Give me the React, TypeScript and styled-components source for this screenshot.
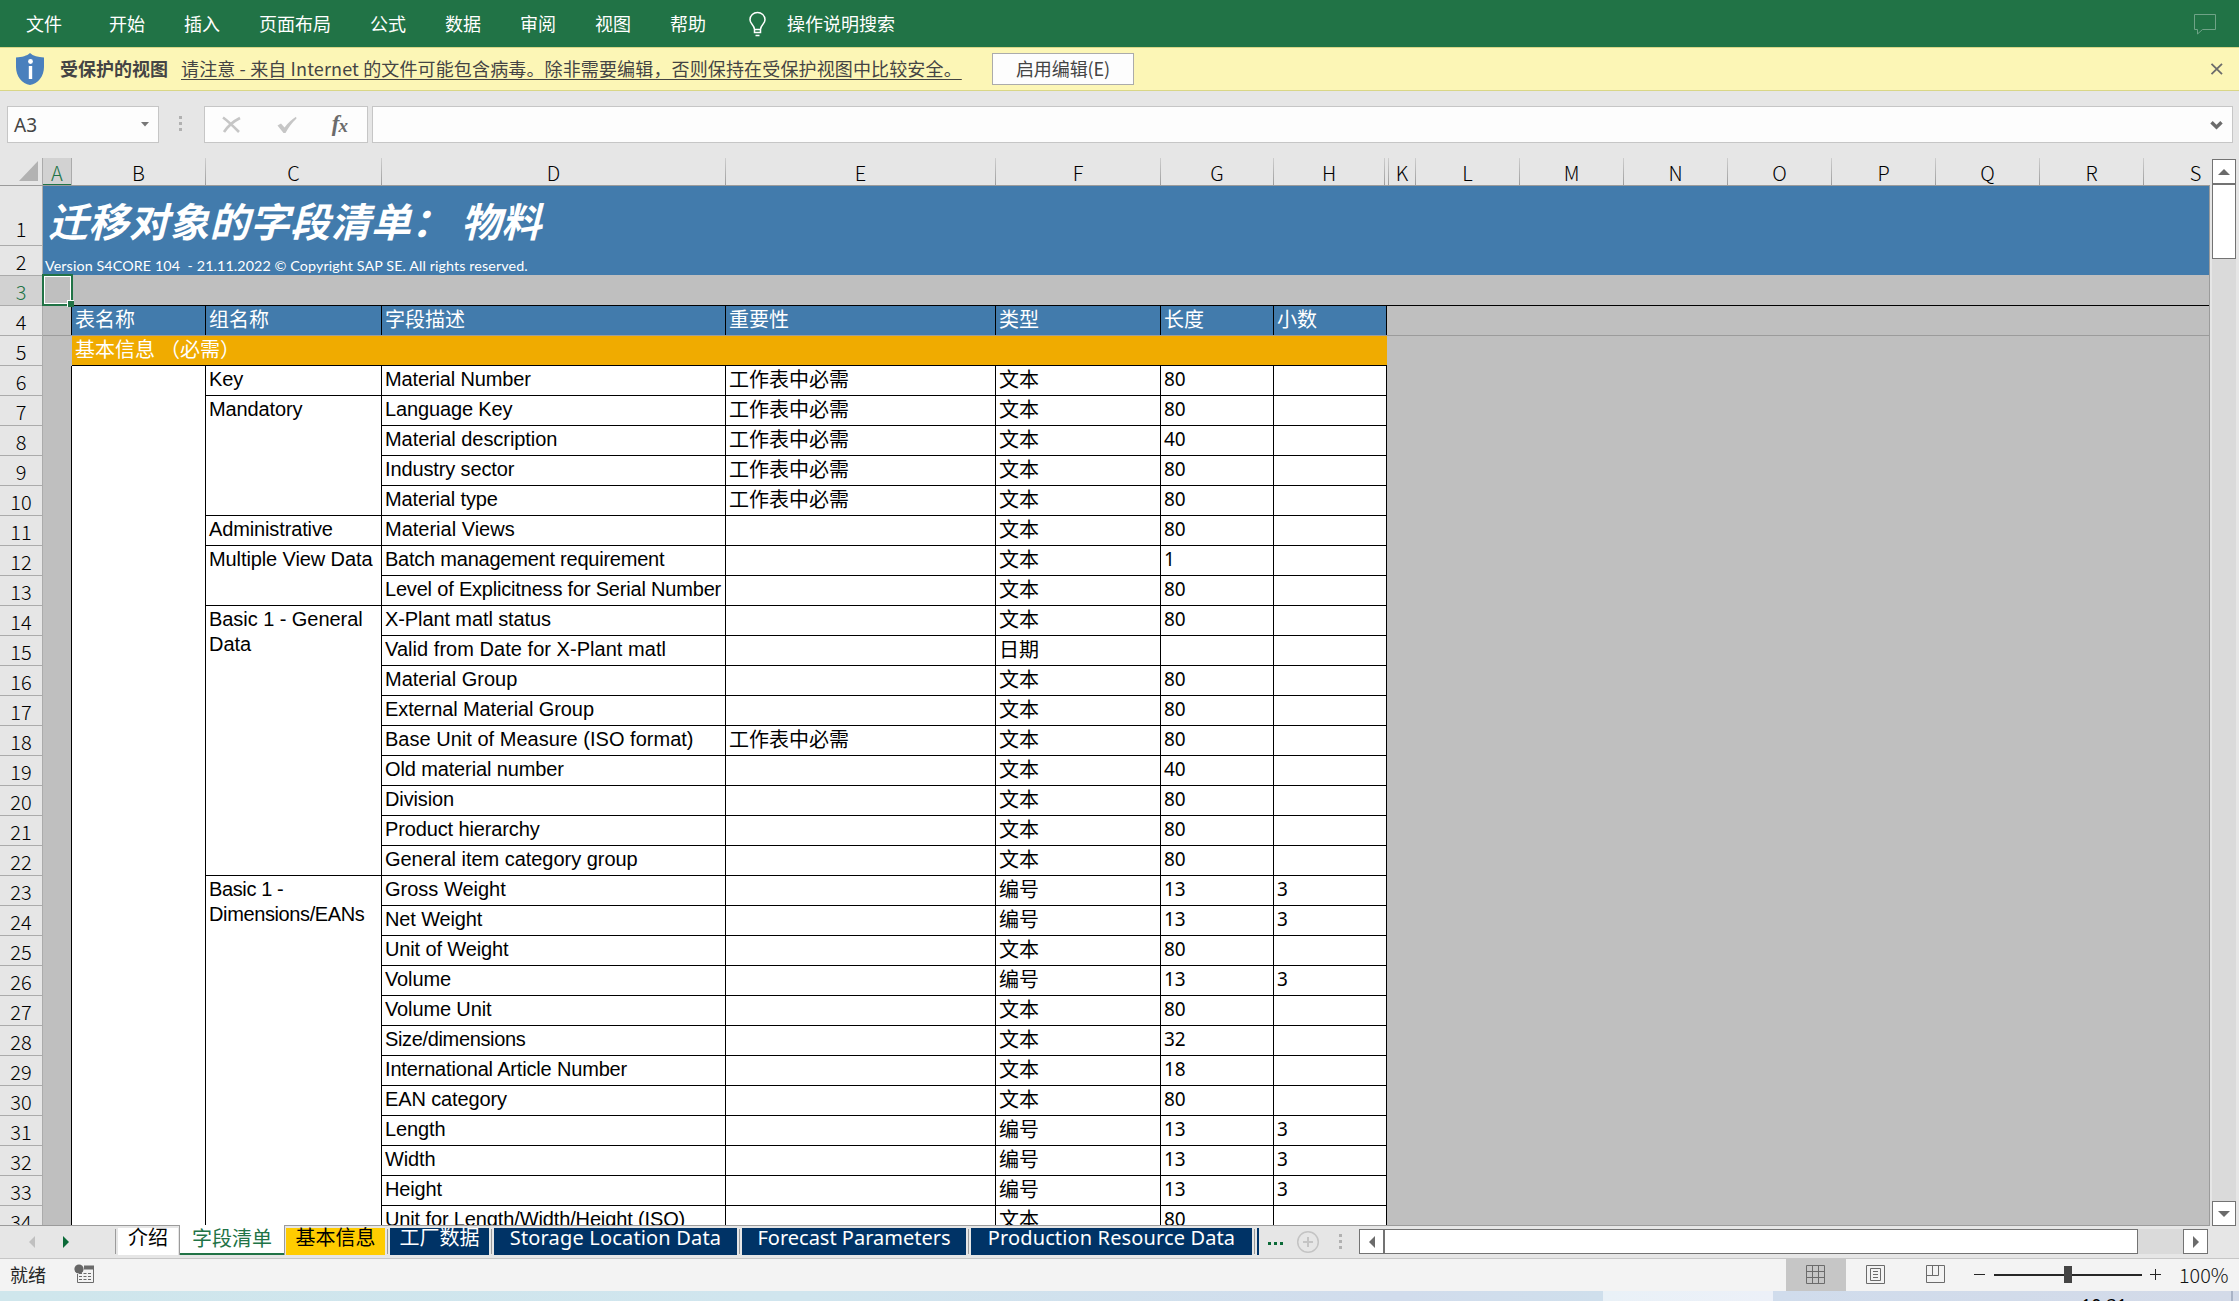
import React from "react";
import styled, { createGlobalStyle } from "styled-components";

const UI = `"Noto Sans CJK SC", "Noto Sans", sans-serif`;
const LATIN_UI = `"Noto Sans", "Noto Sans CJK SC", sans-serif`;

const Global = createGlobalStyle`
  * { box-sizing: border-box; }
  body { margin: 0; overflow: hidden; background: #e6e6e6; }
`;

const Window = styled.div`
  width: 2239px;
  height: 1301px;
  display: flex;
  flex-direction: column;
  overflow: hidden;
  background: #e6e6e6;
  font-family: ${UI};
  color: #444;
`;

/* ---------- ribbon ---------- */
const Ribbon = styled.nav`
  height: 47px;
  flex: none;
  display: flex;
  align-items: center;
  padding: 0 22px 0 26px;
  background: #217346;
  color: #fff;
  font-size: 18px;
  line-height: 26px;
`;
const MenuItem = styled.span<{ $gap?: number }>`
  margin-right: ${(p) => p.$gap ?? 39}px;
  padding-bottom: 2px;
  white-space: nowrap;
`;
const Spacer = styled.div`
  flex: 1;
`;

/* ---------- protected view bar ---------- */
const Notice = styled.div`
  height: 44px;
  flex: none;
  display: flex;
  align-items: center;
  padding: 0 15px 0 16px;
  background: #fcf6b6;
  border-top: 1px solid #d9d687;
  border-bottom: 1px solid #d9d687;
  font-size: 18px;
  line-height: 26px;
  white-space: nowrap;
`;
const NoticeTitle = styled.b`
  margin: 0 13px 0 16px;
  padding-bottom: 2px;
`;
const NoticeLink = styled.span`
  width: 781px;
  padding-bottom: 2px;
  letter-spacing: 0.14px;
  text-decoration: underline;
  text-decoration-thickness: 1px;
  text-underline-offset: 3px;
`;
const EnableButton = styled.button`
  width: 142px;
  height: 32px;
  margin-left: 30px;
  padding: 0;
  border: 1px solid #ababab;
  background: #fdfdfd;
  color: #444;
  font: 18px/26px ${UI};
  letter-spacing: -0.1px;
  padding-bottom: 2px;
`;

/* ---------- formula bar ---------- */
const FormulaBar = styled.div`
  height: 67px;
  flex: none;
  display: flex;
  align-items: flex-start;
  padding: 15px 6px 0 7px;
`;
const Field = styled.div<{ $w?: number }>`
  height: 37px;
  width: ${(p) => (p.$w ? `${p.$w}px` : "auto")};
  flex: ${(p) => (p.$w ? "none" : 1)};
  display: flex;
  align-items: center;
  justify-content: space-between;
  border: 1px solid #c6c6c6;
  background: #fdfdfd;
`;
const NameText = styled.span`
  padding: 2px 0 0 6px;
  font: 19px/33px ${LATIN_UI};
`;
const Dots = styled.div<{ $m: string }>`
  margin: ${(p) => p.$m};
  display: grid;
  gap: 3px;
  flex: none;
  i {
    width: 3px;
    height: 3px;
    background: #b1b1b1;
  }
`;
const Fx = styled.span`
  font: italic bold 23px/30px "Liberation Serif", serif;
  color: #6b6b6b;
  letter-spacing: -1px;
  sub {
    font-size: 19px;
    vertical-align: -1px;
  }
`;

/* ---------- sheet ---------- */
const Middle = styled.div`
  height: 1068px;
  flex: none;
  display: flex;
`;
const Sheet = styled.div`
  width: 2210px;
  height: 1068px;
  flex: none;
  overflow: hidden;
  border-bottom: 1px solid #9b9b9b;
`;
const HeaderRow = styled.div`
  height: 28px;
  display: flex;
  overflow: hidden;
  border-bottom: 1px solid #9b9b9b;
`;
const Corner = styled.div`
  width: 43px;
  flex: none;
  display: flex;
  justify-content: flex-end;
  align-items: flex-end;
  padding: 0 4px 4px 0;
  border-right: 1px solid #ababab;
`;
const ColHead = styled.div<{ $w: number; $active?: boolean }>`
  width: ${(p) => p.$w}px;
  height: 28px;
  flex: none;
  text-align: center;
  font: 300 20px/29px ${UI};
  color: ${(p) => (p.$active ? "#217346" : "#000")};
  background: ${(p) => (p.$active ? "#d2d2d2" : "transparent")};
  border-style: solid;
  border-width: 0 1px 0 0;
  border-image: ${(p) =>
    p.$active ? "linear-gradient(#ababab, #ababab) 1" : "linear-gradient(#d0d0d0, #999) 1"};
  box-shadow: ${(p) => (p.$active ? "inset 0 -2px #217346" : "none")};
`;
const SheetBody = styled.div`
  display: flex;
  height: 1039px;
  overflow: hidden;
  border-right: 1px solid #9b9b9b;
`;
const RowHeads = styled.div`
  width: 43px;
  flex: none;
`;
const RowHead = styled.div<{ $h: number; $active?: boolean }>`
  height: ${(p) => p.$h}px;
  display: flex;
  align-items: flex-end;
  justify-content: center;
  padding-bottom: ${(p) => (p.$h > 30 ? 3 : 0)}px;
  font: 300 20px/26px ${UI};
  color: ${(p) => (p.$active ? "#217346" : "#000")};
  background: ${(p) => (p.$active ? "#d2d2d2" : "#e6e6e6")};
  border-right: 1px solid #ababab;
  border-bottom: 1px solid #ababab;
`;
const Cells = styled.div`
  position: relative;
  flex: 1;
  background: #bfbfbf;
`;
const Banner = styled.div`
  height: 89px;
  background: #427bac;
  color: #fff;
  white-space: pre;
  overflow: hidden;
`;
const Title = styled.div`
  height: 60px;
  padding-left: 5px;
  font: italic bold 40px/68px ${UI};
  letter-spacing: 0.35px;
`;
const Version = styled.div`
  padding-left: 2px;
  font: 14.3px/40px Lato, sans-serif;
  height: 29px;
  letter-spacing: 0.1px;
`;
const BlankRow = styled.div`
  height: 31px;
  margin-left: 29px;
  border-bottom: 1px solid #000;
`;
const Selection = styled.div`
  position: absolute;
  left: -1px;
  top: 88px;
  width: 31px;
  height: 32px;
  border: 2px solid #217346;
  outline: 1px solid #fff;
  outline-offset: -3px;
  &::after {
    content: "";
    position: absolute;
    right: -3px;
    bottom: -3px;
    width: 6px;
    height: 6px;
    background: #217346;
    border-left: 1px solid #fff;
    border-top: 1px solid #fff;
  }
`;
const columns = "134px 176px 344px 270px 165px 113px 113px";
const FrozenRow = styled.div`
  height: 30px;
  padding-left: 28px;
  border-bottom: 1px solid #9b9b9b;
`;
const HeadCells = styled.div`
  width: 1316px;
  height: 29px;
  display: grid;
  grid-template-columns: ${columns};
  background: #427bac;
  border-left: 1px solid #000;
`;
const HeadCell = styled.div`
  padding-left: 3px;
  color: #fff;
  font: 400 20px/25px ${UI};
  border-right: 1px solid #000;
`;
const Section = styled.div`
  width: 1315px;
  height: 30px;
  margin-left: 29px;
  padding-left: 3px;
  background: #f0ab00;
  border-bottom: 1px solid #000;
  color: #fff;
  font: 400 20px/25px ${UI};
  font-feature-settings: "halt";
  word-spacing: 3px;
  white-space: pre;
`;
const Table = styled.div`
  width: 1316px;
  margin-left: 28px;
  display: grid;
  grid-template-columns: ${columns};
  grid-auto-rows: 30px;
  background: #fff;
  border-left: 1px solid #000;
`;
const Cell = styled.div<{
  $col: number;
  $row: number;
  $span?: number;
  $kind?: "cjk" | "num";
  $track?: number;
}>`
  grid-column: ${(p) => p.$col};
  grid-row: ${(p) => p.$row} / span ${(p) => p.$span ?? 1};
  padding-left: 3px;
  padding-top: ${(p) => (p.$kind === "cjk" ? 0 : 1)}px;
  border-right: 1px solid #000;
  border-bottom: 1px solid #000;
  color: #000;
  white-space: ${(p) => (p.$col === 2 ? "normal" : "nowrap")};
  font: ${(p) =>
    p.$kind === "cjk"
      ? `400 20px/25px ${UI}`
      : p.$kind === "num"
        ? `19px/24px ${LATIN_UI}`
        : `20px/25px "Liberation Sans", sans-serif`};
  letter-spacing: ${(p) => p.$track ?? (p.$kind ? 0 : -0.13)}px;
`;

/* ---------- scroll bars ---------- */
const VScroll = styled.div`
  width: 24px;
  height: 1068px;
  margin-left: 2px;
  display: flex;
  flex-direction: column;
  padding-top: 1px;
  background: linear-gradient(#dadada, #dadada) 0 10px / 24px 1050px no-repeat;
`;
const ScrollBox = styled.div<{ $w: number; $h: number }>`
  width: ${(p) => p.$w}px;
  height: ${(p) => p.$h}px;
  flex: none;
  display: flex;
  align-items: center;
  justify-content: center;
  background: #fff;
  border: 1px solid #737373;
`;

/* ---------- sheet tabs ---------- */
const TabBar = styled.div`
  height: 32px;
  flex: none;
  display: flex;
  align-items: flex-start;
`;
const TabNav = styled.div`
  width: 115px;
  height: 32px;
  flex: none;
  display: flex;
  align-items: center;
  gap: 28px;
  padding: 0 0 0 29px;
`;
const Tab = styled.div<{ $w: number; $bg: string; $fg: string; $ml?: number; $track?: number }>`
  width: ${(p) => p.$w}px;
  height: 27px;
  flex: none;
  margin: 2px 0 0 ${(p) => p.$ml ?? 2}px;
  background: ${(p) => p.$bg};
  color: ${(p) => p.$fg};
  text-align: center;
  white-space: nowrap;
  font: 20px/19px ${LATIN_UI};
  letter-spacing: ${(p) => p.$track ?? 0}px;
`;
const ActiveTab = styled.div`
  width: 106px;
  height: 30px;
  flex: none;
  margin: -1px 0 0 1px;
  background: #fff;
  color: #217346;
  text-align: center;
  font: 400 20px/25px ${UI};
  border: 1px solid #9b9b9b;
  border-width: 0 1px 0 1px;
  box-shadow: inset 0 -2px #217346;
`;
const Sep = styled.div<{ $ml?: number }>`
  width: 1px;
  height: 25px;
  flex: none;
  margin: 3px 0 0 ${(p) => p.$ml ?? 2}px;
  background: #9b9b9b;
`;
const More = styled.div`
  display: flex;
  gap: 3px;
  margin: 16px 13px 0 9px;
  i {
    width: 3px;
    height: 3px;
    background: #0b6a38;
  }
`;
const AddIcon = styled.svg`
  flex: none;
  margin-top: 4px;
`;
const HScroll = styled.div`
  width: 849px;
  height: 25px;
  flex: none;
  display: flex;
  margin-top: 3px;
  background: #dadada;
`;

/* ---------- status bar ---------- */
const Status = styled.div`
  height: 33px;
  flex: none;
  display: flex;
  align-items: center;
  background: #f3f3f3;
  border-top: 1px solid #c6c6c6;
  padding-left: 10px;
  font-size: 18px;
  line-height: 26px;
`;
const Ready = styled.span`
  padding-bottom: 2px;
  color: #262626;
`;
const ViewButton = styled.div<{ $on?: boolean }>`
  width: 60px;
  height: 32px;
  display: flex;
  align-items: center;
  justify-content: center;
  background: ${(p) => (p.$on ? "#c6c6c6" : "transparent")};
`;
const Percent = styled.span`
  width: 50px;
  margin: 0 10px 0 18px;
  font: 300 19.8px/28px ${UI};
  color: #111;
  white-space: nowrap;
`;
const ReadyIcon = styled.svg`
  margin: 0 0 2px 28px;
`;
const Taskbar = styled.div`
  height: 10px;
  flex: none;
  display: flex;
  overflow: hidden;
  background: linear-gradient(90deg, #cfe6ec 0, #d0e5ee 800px, #d1dcec 1400px, #cfdfec 1603px);
`;
const TaskLight = styled.div`
  width: 170px;
  margin-left: 1603px;
  background: linear-gradient(90deg, #e9f1f7, #ecf0f8);
`;
const Tray = styled.div`
  width: 466px;
  padding-left: 308px;
  background: linear-gradient(90deg, #d0dcec, #d3dae8);
  color: #000;
  font: 18px/29px ${LATIN_UI};
  box-shadow: inset -6px 0 #d3dae8, inset -8px 0 #a9b3c6;
`;

const SearchHint = styled.span`
  padding: 0 0 2px 19px;
`;
const PadIcon = styled.span`
  display: flex;
  padding-right: 9px;
`;
const Tools = styled.div`
  width: 100%;
  display: flex;
  align-items: center;
  justify-content: space-between;
  padding: 0 20px 0 17px;
`;
const Gap = styled.div`
  width: 4px;
  flex: none;
`;

const Arrow = ({ dir, color = "#6b6b6b" }: { dir: "up" | "down" | "left" | "right"; color?: string }) => {
  const paths = {
    up: "M0 6L6 0L12 6Z",
    down: "M0 0H12L6 6Z",
    left: "M6 0V12L0 6Z",
    right: "M0 0V12L6 6Z",
  };
  const flat = dir === "up" || dir === "down";
  return (
    <svg width={flat ? 12 : 6} height={flat ? 6 : 12}>
      <path d={paths[dir]} fill={color} />
    </svg>
  );
};

const REQ = "工作表中必需";
const T = "文本";
const N = "编号";
const rows: [string, string, string, string, string, number?][] = [
  ["Material Number", REQ, T, "80", ""],
  ["Language Key", REQ, T, "80", ""],
  ["Material description", REQ, T, "40", "", -0.05],
  ["Industry sector", REQ, T, "80", ""],
  ["Material type", REQ, T, "80", ""],
  ["Material Views", "", T, "80", "", 0],
  ["Batch management requirement", "", T, "1", "", -0.23],
  ["Level of Explicitness for Serial Number", "", T, "80", "", -0.19],
  ["X-Plant matl status", "", T, "80", "", -0.1],
  ["Valid from Date for X-Plant matl", "", "日期", "", "", 0.04],
  ["Material Group", "", T, "80", "", 0],
  ["External Material Group", "", T, "80", "", -0.1],
  ["Base Unit of Measure (ISO format)", REQ, T, "80", "", 0.02],
  ["Old material number", "", T, "40", ""],
  ["Division", "", T, "80", ""],
  ["Product hierarchy", "", T, "80", ""],
  ["General item category group", "", T, "80", "", -0.03],
  ["Gross Weight", "", N, "13", "3", 0],
  ["Net Weight", "", N, "13", "3"],
  ["Unit of Weight", "", T, "80", ""],
  ["Volume", "", N, "13", "3"],
  ["Volume Unit", "", T, "80", ""],
  ["Size/dimensions", "", T, "32", "", -0.35],
  ["International Article Number", "", T, "18", "", -0.17],
  ["EAN category", "", T, "80", ""],
  ["Length", "", N, "13", "3"],
  ["Width", "", N, "13", "3"],
  ["Height", "", N, "13", "3"],
  ["Unit for Length/Width/Height (ISO)", "", T, "80", ""],
];
const groups: [string, number, number, number?][] = [
  ["Key", 1, 1],
  ["Mandatory", 2, 4],
  ["Administrative", 6, 1],
  ["Multiple View Data", 7, 2, -0.1],
  ["Basic 1 - General Data", 9, 9, -0.05],
  ["Basic 1 - Dimensions/EANs", 18, 12, -0.38],
];
const heads: [string, number][] = [
  ["A", 29], ["B", 134], ["C", 176], ["D", 344], ["E", 270], ["F", 165], ["G", 113], ["H", 111],
  ["", 4], ["K", 27], ["L", 104], ["M", 104], ["N", 104], ["O", 104], ["P", 104], ["Q", 104],
  ["R", 104], ["S", 104],
];
const menu = ["开始", "插入", "页面布局", "公式", "数据", "审阅", "视图"];
const NAVY = "#003366";

export default function App() {
  return (
    <Window>
      <Global />
      <Ribbon>
        <MenuItem $gap={47}>文件</MenuItem>
        {menu.map((m) => (
          <MenuItem key={m}>{m}</MenuItem>
        ))}
        <MenuItem $gap={42}>帮助</MenuItem>
        <svg width="20" height="26" viewBox="0 0 20 26" fill="none" stroke="#fff" strokeWidth="1.5">
          <path d="M6.5 18.5C6.5 14 2 13 2 8.8C2 4.5 5.5 1.5 9.500 1.5S17 4.5 17 8.8C17 13 12.5 14 12.5 18.5ZM6.5 18.5V21.5H12.5V18.5M7.5 24.5H11.5" />
        </svg>
        <SearchHint>操作说明搜索</SearchHint>
        <Spacer />
        <svg width="24" height="22" viewBox="0 0 24 22" fill="none" stroke="#6fa387" strokeWidth="1">
          <path d="M1.5 1.5H22.5V16.5H9.5L4.5 21V16.5H1.5Z" />
        </svg>
      </Ribbon>

      <Notice>
        <svg width="28" height="32" viewBox="0 0 28 32">
          <path d="M14 0C17 3 22 4 28 4.5V14C28 23 22 31 14 32C6 31 0 23 0 14V4.5C6 4 11 3 14 0Z" fill="#4a80bd" />
          <circle cx="14.5" cy="8.500" r="2.4" fill="#fff" />
          <rect x="12.8" y="13" width="3.4" height="13" fill="#fff" />
        </svg>
        <NoticeTitle>受保护的视图</NoticeTitle>
        <NoticeLink>请注意 - 来自 Internet 的文件可能包含病毒。除非需要编辑，否则保持在受保护视图中比较安全。</NoticeLink>
        <EnableButton>启用编辑(E)</EnableButton>
        <Spacer />
        <svg width="14" height="12" viewBox="0 0 14 12" stroke="#6b6b6b" strokeWidth="1.8">
          <path d="M1.5 0.8L12 11.2M12 0.8L1.5 11.2" />
        </svg>
      </Notice>

      <FormulaBar>
        <Field $w={152}>
          <NameText>A3</NameText>
          <PadIcon>
            <svg width="8" height="5">
              <path d="M0 0H8L4 4.500Z" fill="#777" />
            </svg>
          </PadIcon>
        </Field>
        <Dots $m="10px 22px 0 20px">
          <i /><i /><i />
        </Dots>
        <Field $w={164}>
          <Tools>
            <svg width="20" height="18" fill="none" stroke="#c6c6c6" strokeWidth="2.6">
              <path d="M1 1.5C6 5 12 11 17 16M18 2C11 5.5 6 10 2 16" />
            </svg>
            <svg width="20" height="18" fill="#c6c6c6">
              <path d="M0.500 9.500L4 7.500L7.500 11.500C11 7 14.500 3.500 19 0.800L19.500 2.500C15 6.500 11.500 11.500 8.500 17H6.500Z" />
            </svg>
            <Fx>
              f<sub>x</sub>
            </Fx>
          </Tools>
        </Field>
        <Gap />
        <Field>
          <span />
          <PadIcon>
            <svg width="13" height="11" fill="none" stroke="#6b6b6b" strokeWidth="3.4">
              <path d="M1.5 3.200L6.500 8.200L11.500 3.200" />
            </svg>
          </PadIcon>
        </Field>
      </FormulaBar>

      <Middle>
        <Sheet>
          <HeaderRow>
            <Corner>
              <svg width="19" height="20">
                <path d="M19 0V20H0Z" fill="#b2b2b2" />
              </svg>
            </Corner>
            {heads.map(([h, w], i) => (
              <ColHead key={i} $w={w} $active={h === "A"}>
                {h}
              </ColHead>
            ))}
          </HeaderRow>
          <SheetBody>
            <RowHeads>
              {Array.from({ length: 34 }, (_, i) => (
                <RowHead key={i} $h={i === 0 ? 60 : 30} $active={i === 2}>
                  {i + 1}
                </RowHead>
              ))}
            </RowHeads>
            <Cells>
              <Banner>
                <Title>迁移对象的字段清单： 物料</Title>
                <Version>{"Version S4CORE 104  - 21.11.2022 © Copyright SAP SE. All rights reserved."}</Version>
              </Banner>
              <BlankRow />
              <FrozenRow>
                <HeadCells>
                  {["表名称", "组名称", "字段描述", "重要性", "类型", "长度", "小数"].map((t) => (
                    <HeadCell key={t}>{t}</HeadCell>
                  ))}
                </HeadCells>
              </FrozenRow>
              <Section>{"基本信息  （必需）"}</Section>
              <Table>
                <Cell $col={1} $row={1} $span={29} />
                {groups.map(([g, r, s, track]) => (
                  <Cell key={g} $col={2} $row={r} $span={s} $track={track}>
                    {g}
                  </Cell>
                ))}
                {rows.map(([d, imp, type, len, dec, track], i) => (
                  <React.Fragment key={d}>
                    <Cell $col={3} $row={i + 1} $track={track}>{d}</Cell>
                    <Cell $col={4} $row={i + 1} $kind="cjk">{imp}</Cell>
                    <Cell $col={5} $row={i + 1} $kind="cjk">{type}</Cell>
                    <Cell $col={6} $row={i + 1} $kind="num">{len}</Cell>
                    <Cell $col={7} $row={i + 1} $kind="num">{dec}</Cell>
                  </React.Fragment>
                ))}
              </Table>
              <Selection />
            </Cells>
          </SheetBody>
        </Sheet>
        <VScroll>
          <ScrollBox $w={24} $h={25}><Arrow dir="up" /></ScrollBox>
          <ScrollBox $w={24} $h={75} />
          <Spacer />
          <ScrollBox $w={24} $h={25}><Arrow dir="down" /></ScrollBox>
        </VScroll>
      </Middle>

      <TabBar>
        <TabNav>
          <Arrow dir="left" color="#c0c0c0" />
          <Arrow dir="right" color="#0b6a38" />
        </TabNav>
        <Sep $ml={0} />
        <Tab $w={60} $bg="#fff" $fg="#000">介绍</Tab>
        <ActiveTab>字段清单</ActiveTab>
        <Tab $w={99} $bg="#ffcc00" $fg="#000" $ml={1}>基本信息</Tab>
        <Sep />
        <Tab $w={99} $bg={NAVY} $fg="#fff">工厂数据</Tab>
        <Sep />
        <Tab $w={243} $bg={NAVY} $fg="#fff" $track={0.17}>Storage Location Data</Tab>
        <Sep />
        <Tab $w={224} $bg={NAVY} $fg="#fff">Forecast Parameters</Tab>
        <Sep />
        <Tab $w={281} $bg={NAVY} $fg="#fff" $track={0.13}>Production Resource Data</Tab>
        <Sep />
        <Tab $w={2} $bg={NAVY} $fg="#fff" />
        <More><i /><i /><i /></More>
        <AddIcon width="24" height="24" fill="none" stroke="#c4c4c4" strokeWidth="1.5">
          <circle cx="12" cy="12" r="10.3" />
          <path d="M7 12H17M12 7V17" strokeWidth="2" />
        </AddIcon>
        <Dots $m="8px 17px 0 19px">
          <i /><i /><i />
        </Dots>
        <HScroll>
          <ScrollBox $w={25} $h={25}><Arrow dir="left" /></ScrollBox>
          <ScrollBox $w={754} $h={25} />
          <Spacer />
          <ScrollBox $w={25} $h={25}><Arrow dir="right" /></ScrollBox>
        </HScroll>
      </TabBar>

      <Status>
        <Ready>就绪</Ready>
        <ReadyIcon width="21" height="20" viewBox="0 0 21 20">
          <path d="M3.5 10V18.5H19.5V2" fill="none" stroke="#6b6b6b" />
          <rect x="10" y="1.5" width="10" height="4" fill="#6b6b6b" />
          <circle cx="5" cy="5" r="4.6" fill="#666" />
          <path d="M5 9.5H18M5 12.5H18M5 15.5H18" stroke="#6b6b6b" strokeDasharray="3 1.5" />
        </ReadyIcon>
        <Spacer />
        <ViewButton $on>
          <svg width="20" height="20" fill="none" stroke="#6b6b6b">
            <path d="M0.5 0.5H18.5V18.5H0.5ZM6.5 0V19M12.5 0V19M0 6.5H19M0 12.5H19" />
          </svg>
        </ViewButton>
        <ViewButton>
          <svg width="20" height="20" fill="none" stroke="#6b6b6b">
            <path d="M0.5 0.5H18.5V18.5H0.5ZM4.5 3.5H14.5V15.5H4.5ZM7 6.5H12M7 9.5H12M7 12.5H12" />
          </svg>
        </ViewButton>
        <ViewButton>
          <svg width="20" height="20" fill="none" stroke="#6b6b6b">
            <path d="M0.5 0.5H18.5V17.5H0.5ZM0 10.5H12.5V0M6.5 0V10" />
          </svg>
        </ViewButton>
        <svg width="195" height="32" fill="none" stroke="#262626">
          <path d="M8 15.5H19M184 15.5H195M189.5 10V21" />
          <path d="M28 16H176" strokeWidth="2" />
          <rect x="98" y="7" width="8" height="17" fill="#444" stroke="none" />
        </svg>
        <Percent>100%</Percent>
      </Status>
      <Taskbar>
        <TaskLight />
        <Tray>10:31</Tray>
      </Taskbar>
    </Window>
  );
}
